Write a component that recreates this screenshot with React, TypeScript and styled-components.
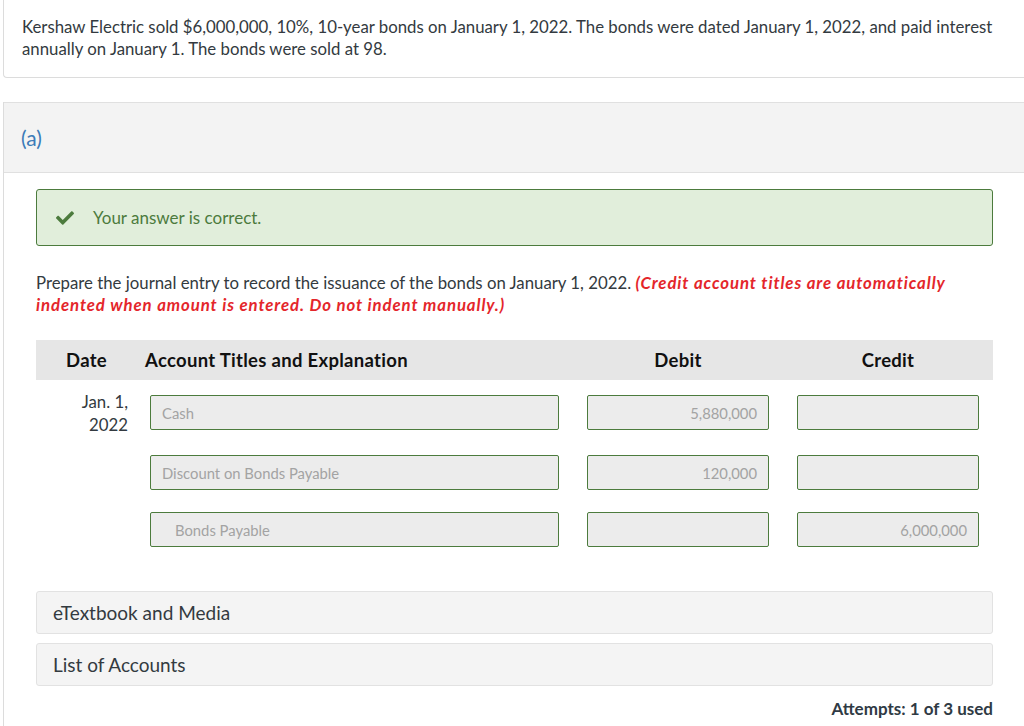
import React from 'react'
import styled, { createGlobalStyle } from 'styled-components'
import { FaCheck } from 'react-icons/fa'

interface IEntry {
    date?: string[];
    account: string;
    indent?: boolean;
    debit?: string;
    credit?: string;
    space: number;
}

const entries: IEntry[] = [
    { date: ['Jan. 1,', '2022'], account: 'Cash', debit: '5,880,000', space: 15 },
    { account: 'Discount on Bonds Payable', debit: '120,000', space: 19 },
    { account: 'Bonds Payable', indent: true, credit: '6,000,000', space: 22 },
]

const GlobalStyle = createGlobalStyle`
    html, body {
        margin: 0;
        padding: 0;
        background: #fff;
        overflow: hidden;
    }
    body {
        font-family: Lato, "Open Sans", sans-serif;
        color: #333a40;
    }
`

const Page = styled.div`
    padding-left: 3px;
`

const QuestionCard = styled.div`
    border: 1px solid #dcdcdc;
    border-top: none;
    border-right: none;
    border-radius: 0 0 0 4px;
    padding: 16px 18px 17px 18px;
    font-size: 16.8px;
    line-height: 22px;
    color: #333a40;
`

const Section = styled.section`
    margin-top: 24px;
    border-left: 1px solid #dcdcdc;
    padding-bottom: 40px;
`

const SectionHead = styled.div`
    height: 69px;
    display: flex;
    align-items: center;
    padding-left: 17px;
    background: #f3f3f3;
    border-top: 1px solid #e0e0e0;
    border-bottom: 1px solid #e0e0e0;
    font-size: 21px;
    color: #3b7bb8;
`

const SectionBody = styled.div`
    padding: 16px 0 0 32px;
    width: 957px;
`

const Notice = styled.div`
    height: 55px;
    display: flex;
    align-items: center;
    gap: 19px;
    padding-left: 19px;
    background: #e1eedb;
    border: 1px solid #4c7b3d;
    border-radius: 3px;
    color: #4c7b3d;
    font-size: 17px;
`

const Prompt = styled.p`
    margin: 26px 0 0 0;
    font-size: 16.8px;
    line-height: 22px;
    color: #333a40;
`

const Warn = styled.span`
    color: #e4262b;
    font-weight: 700;
    font-style: italic;
    letter-spacing: 0.9px;
`

const Table = styled.div`
    margin-top: 24px;
`

const HeadRow = styled.div`
    display: grid;
    grid-template-columns: 109px 414px 210px 210px;
    height: 40px;
    align-items: center;
    background: #e6e6e6;
    font-size: 18.5px;
    font-weight: 700;
    letter-spacing: 0.3px;
    color: #111;
`

const HeadCell = styled.div<{ center?: boolean; pad?: number }>`
    text-align: ${p => (p.center ? 'center' : 'left')};
    padding-left: ${p => p.pad ?? 0}px;
`

const Row = styled.div<{ space: number }>`
    display: grid;
    grid-template-columns: 114px 409px 210px 210px;
    align-items: start;
    margin-top: ${p => p.space}px;
`

const DateCell = styled.div`
    margin-top: -5px;
    padding-right: 22px;
    text-align: right;
    font-size: 16.8px;
    line-height: 23px;
    color: #333a40;
`

const AmountCell = styled.div`
    padding-left: 28px;
`

const Field = styled.div<{ right?: boolean; indent?: boolean }>`
    height: 33px;
    display: flex;
    align-items: center;
    justify-content: ${p => (p.right ? 'flex-end' : 'flex-start')};
    padding: 0 11px 0 ${p => (p.indent ? 24 : 11)}px;
    background: #ececec;
    border: 1px solid #4c7b3d;
    border-radius: 2px;
    font-size: 14.8px;
    color: #a3a3a3;
`

const Panel = styled.div<{ space: number }>`
    margin-top: ${p => p.space}px;
    height: 41px;
    display: flex;
    align-items: center;
    padding-left: 16px;
    background: #f4f4f4;
    border: 1px solid #e2e2e2;
    border-radius: 3px;
    font-size: 19px;
    color: #333a40;
`

const Attempts = styled.div`
    margin-top: 12px;
    text-align: right;
    font-size: 17px;
    font-weight: 700;
    color: #2f3a44;
`

const App: React.FC = () => {
  return (
    <Page>
        <GlobalStyle />
        <QuestionCard>
            Kershaw Electric sold $6,000,000, 10%, 10-year bonds on January 1, 2022. The bonds were dated January 1, 2022, and paid interest annually on January 1. The bonds were sold at 98.
        </QuestionCard>
        <Section>
            <SectionHead>(a)</SectionHead>
            <SectionBody>
                <Notice>
                    <FaCheck size={18} />
                    <span>Your answer is correct.</span>
                </Notice>
                <Prompt>
                    Prepare the journal entry to record the issuance of the bonds on January 1, 2022. <Warn>(Credit account titles are automatically indented when amount is entered. Do not indent manually.)</Warn>
                </Prompt>
                <Table>
                    <HeadRow>
                        <HeadCell pad={30}>Date</HeadCell>
                        <HeadCell>Account Titles and Explanation</HeadCell>
                        <HeadCell center pad={28}>Debit</HeadCell>
                        <HeadCell center pad={28}>Credit</HeadCell>
                    </HeadRow>
                    {entries.map(entry =>
                        <Row key={entry.account} space={entry.space}>
                            <DateCell>
                                {entry.date?.map(line => <div key={line}>{line}</div>)}
                            </DateCell>
                            <Field indent={entry.indent}>{entry.account}</Field>
                            <AmountCell><Field right>{entry.debit}</Field></AmountCell>
                            <AmountCell><Field right>{entry.credit}</Field></AmountCell>
                        </Row>
                    )}
                </Table>
                <Panel space={44}>eTextbook and Media</Panel>
                <Panel space={9}>List of Accounts</Panel>
                <Attempts>Attempts: 1 of 3 used</Attempts>
            </SectionBody>
        </Section>
    </Page>
  )
}

export default App
